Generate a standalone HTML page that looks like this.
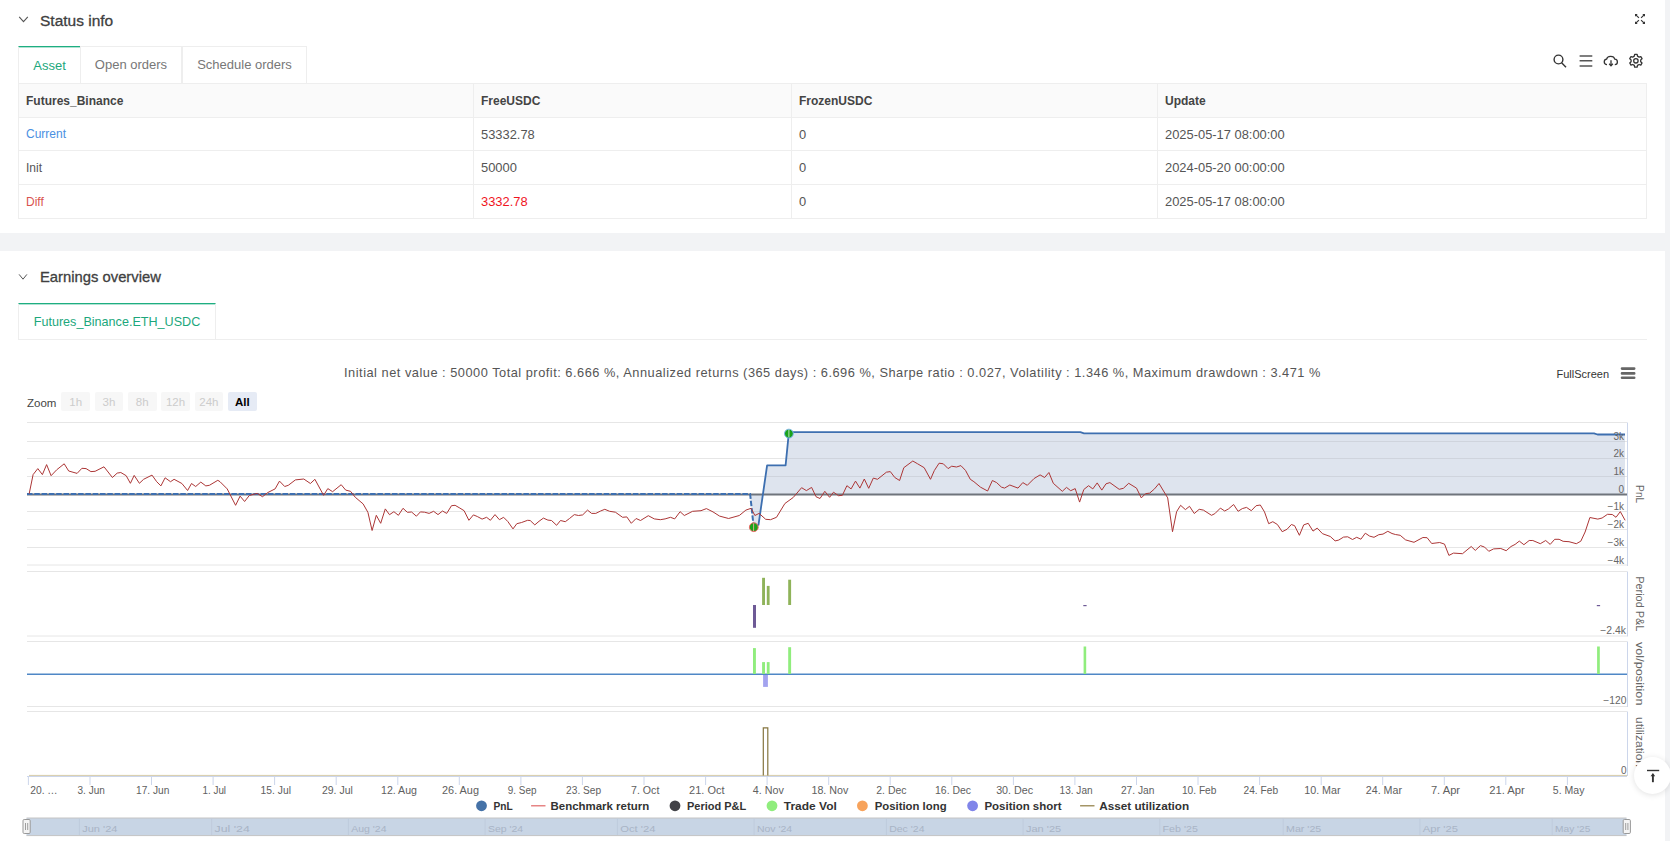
<!DOCTYPE html>
<html><head><meta charset="utf-8">
<style>
*{box-sizing:border-box;margin:0;padding:0}
html,body{width:1670px;height:841px;overflow:hidden;background:#f2f3f5;font-family:"Liberation Sans",sans-serif;color:#333}
.card{position:absolute;left:0;width:1665px;background:#fff}
.abs{position:absolute;white-space:nowrap}
.hdr{font-size:15px;color:#404040;line-height:1;-webkit-text-stroke:0.3px #404040}
.tabs{position:absolute;top:46px;left:18px;height:37px}
.tab{position:absolute;top:0;height:37px;border:1px solid #eeeeee;border-bottom:none;font-size:13px;color:#777;text-align:center;line-height:35px}
.tab.on{border-top:1px solid #1eae81;box-shadow:inset 0 1px 0 rgba(30,174,129,0.35);color:#1ca77c;line-height:37px}
table{position:absolute;left:18px;top:83px;width:1628px;border-collapse:collapse;font-size:12px;table-layout:fixed}
td,th{border:1px solid #eeeeee;padding:0 7px;text-align:left;color:#555;height:34px}
th{background:#fafafa;font-weight:bold;color:#444}
td.n{font-size:12.9px}
tr.r33 td{height:33px}
.zb{position:absolute;top:392px;width:28.5px;height:19px;background:#f7f7f7;border-radius:2px;font-size:11.5px;color:#ccc;text-align:center;line-height:21px}
</style></head><body>
<div class="card" style="top:0;height:233px"></div>
<div class="card" style="top:251px;height:600px"></div>

<!-- Status info header -->
<svg class="abs" style="left:18px;top:15px" width="12" height="10" viewBox="0 0 12 10"><path d="M1.2 1.8 L5.5 6.6 L9.8 1.8" fill="none" stroke="#555" stroke-width="1.1"/></svg>
<div class="abs hdr" style="left:40px;top:13px;font-size:15.5px">Status info</div>
<svg class="abs" style="left:1633px;top:12px" width="14" height="14" viewBox="0 0 14 14">
<g stroke="#333" stroke-width="1.15" fill="none">
<path d="M2.6 2.6 L5.9 5.9"/><path d="M11.4 2.6 L8.1 5.9"/><path d="M2.6 11.4 L5.9 8.1"/><path d="M11.4 11.4 L8.1 8.1"/></g>
<g fill="#333"><path d="M2 2 h2.7 l-2.7 2.7z"/><path d="M12 2 h-2.7 l2.7 2.7z"/><path d="M2 12 h2.7 l-2.7 -2.7z"/><path d="M12 12 h-2.7 l2.7 -2.7z"/></g>
</svg>

<div class="tabs">
<div class="tab on" style="left:0;width:63px">Asset</div>
<div class="tab" style="left:62px;width:102px">Open orders</div>
<div class="tab" style="left:164px;width:125px">Schedule orders</div>
</div>

<!-- top right icons -->
<svg class="abs" style="left:1550px;top:52px" width="95" height="20" viewBox="0 0 95 20">
<g fill="none" stroke="#333" stroke-width="1.4">
<circle cx="8.5" cy="7.5" r="4.4"/><path d="M11.6 10.8 L16 15.2"/>
</g>
<g stroke="#555" stroke-width="1.5"><path d="M29.6 3.9h12.7M29.6 8.8h12.7M29.6 13.9h12.7"/></g>
<g fill="none" stroke="#333" stroke-width="1.3">
<path d="M57 12.6 C53.5 12.6 53.3 7.6 56.6 7.2 C57.2 3.6 63.8 3.2 64.8 7.2 C68.3 7.4 68.2 12.6 64.8 12.6"/>
<path d="M61 8.2 V13.5"/><path d="M59.2 11.8 L61 13.8 L62.8 11.8"/>
</g>
<g fill="none" stroke="#333" stroke-width="1.3">
<path stroke-linejoin="round" d="M84.66 2.42 L87.14 2.42 L87.50 4.17 L89.11 5.10 L90.81 4.54 L92.05 6.68 L90.71 7.87 L90.71 9.73 L92.05 10.92 L90.81 13.06 L89.11 12.50 L87.50 13.43 L87.14 15.18 L84.66 15.18 L84.30 13.43 L82.69 12.50 L80.99 13.06 L79.75 10.92 L81.09 9.73 L81.09 7.87 L79.75 6.68 L80.99 4.54 L82.69 5.10 L84.30 4.17Z"/>
<circle cx="85.9" cy="8.8" r="2.2"/>
</g>
</svg>

<table>
<colgroup><col style="width:455px"><col style="width:318px"><col style="width:366px"><col style="width:489px"></colgroup>
<tr><th>Futures_Binance</th><th>FreeUSDC</th><th>FrozenUSDC</th><th>Update</th></tr>
<tr class="r33"><td style="color:#4a90e2">Current</td><td class="n">53332.78</td><td class="n">0</td><td class="n">2025-05-17 08:00:00</td></tr>
<tr><td>Init</td><td class="n">50000</td><td class="n">0</td><td class="n">2024-05-20 00:00:00</td></tr>
<tr><td style="color:#d9534f">Diff</td><td class="n" style="color:#f0141e">3332.78</td><td class="n">0</td><td class="n">2025-05-17 08:00:00</td></tr>
</table>

<!-- Earnings overview -->
<svg class="abs" style="left:18px;top:273px" width="12" height="10" viewBox="0 0 12 10"><path d="M1.1 1.4 L5.0 6.2 L8.9 1.4" fill="none" stroke="#555" stroke-width="1.0"/></svg>
<div class="abs hdr" style="left:40px;top:270px;font-size:14.8px">Earnings overview</div>
<div class="abs" style="left:18px;top:339px;width:1629px;height:1px;background:#eeeeee"></div>
<div class="tab on" style="position:absolute;left:18px;top:303px;width:198px;height:37px;font-size:12.6px">Futures_Binance.ETH_USDC</div>

<div class="abs" style="left:0;width:1665px;top:365px;text-align:center;font-size:12.8px;letter-spacing:0.505px;color:#555;padding-right:0">Initial net value : 50000 Total profit: 6.666 %, Annualized returns (365 days) : 6.696 %, Sharpe ratio : 0.027, Volatility : 1.346 %, Maximum drawdown : 3.471 %</div>
<div class="abs" style="left:1556.5px;top:368px;font-size:11px;color:#333">FullScreen</div>
<svg class="abs" style="left:1618px;top:365px" width="20" height="16" viewBox="0 0 20 16"><g stroke="#666" stroke-width="2.6" stroke-linecap="round"><path d="M4 3.6h12.2M4 8.4h12.2M4 12.8h12.2"/></g></svg>

<div class="abs" style="left:27px;top:396.5px;font-size:11.5px;color:#444">Zoom</div>
<div class="zb" style="left:61.4px">1h</div>
<div class="zb" style="left:94.7px">3h</div>
<div class="zb" style="left:128px">8h</div>
<div class="zb" style="left:161.3px">12h</div>
<div class="zb" style="left:194.6px">24h</div>
<div class="zb" style="left:228px;background:#e6ebf5;color:#000;font-weight:bold">All</div>

<svg class="abs" style="left:0;top:0" width="1670" height="841" viewBox="0 0 1670 841" font-family="&quot;Liberation Sans&quot;, sans-serif">
<g stroke="#e6e6e6" stroke-width="1">
<path d="M27 422.5H1627"/>
<path d="M27 441.5H1627"/>
<path d="M27 458.5H1627"/>
<path d="M27 476.5H1627"/>
<path d="M27 511.5H1627"/>
<path d="M27 529.5H1627"/>
<path d="M27 547.5H1627"/>
<path d="M27 565H1627"/>
<path d="M27 571.5H1627"/>
<path d="M27 636H1627"/>
<path d="M27 641.5H1627"/>
<path d="M27 706.5H1627"/>
<path d="M27 711.5H1627"/>
</g>
<clipPath id="fc"><path d="M27.0 494.5 L750.1 494.5 L753.7 527.2 L758.5 524.8 L767.1 465.4 L785.6 465.4 L788.9 432.2 L1080.4 432.2 L1084.0 433.3 L1594.0 433.3 L1597.5 434.5 L1625.0 434.5 L1625.0 494.5 Z"/></clipPath>
<path d="M27.0 494.5 L750.1 494.5 L753.7 527.2 L758.5 524.8 L767.1 465.4 L785.6 465.4 L788.9 432.2 L1080.4 432.2 L1084.0 433.3 L1594.0 433.3 L1597.5 434.5 L1625.0 434.5 L1625.0 494.5 Z" fill="rgb(72,105,161)" fill-opacity="0.18"/>
<g clip-path="url(#fc)" stroke="#fff" stroke-opacity="0.12" stroke-width="1"><path d="M27 441.5H1627"/><path d="M27 458.5H1627"/><path d="M27 476.5H1627"/></g>
<path d="M27 494.5H1627" stroke="#6f747c" stroke-width="2.2"/>
<path d="M27.0 493.9 L750.1 493.9 L753.7 527.2" fill="none" stroke="#3d6fb0" stroke-width="2" stroke-dasharray="5.5,1.8"/>
<path d="M753.7 527.2 L758.5 524.8 L767.1 465.4 L785.6 465.4 L788.9 432.2 L1080.4 432.2 L1084.0 433.3 L1594.0 433.3 L1597.5 434.5 L1625.0 434.5" fill="none" stroke="#3d6fb0" stroke-width="1.8" stroke-linejoin="round"/>
<path d="M29.2 493.7 L33.1 474.6 L37.8 468.6 L42.4 474.6 L46.6 464.6 L51.1 475.7 L56.7 469.8 L64.2 463.8 L68.7 471.0 L77.1 473.4 L81.9 468.3 L86.1 468.6 L90.9 471.6 L95.1 471.3 L104.0 466.8 L112.4 477.5 L117.2 473.1 L120.8 472.5 L126.2 475.7 L130.4 483.3 L134.2 475.4 L139.4 483.3 L143.6 479.3 L152.0 475.1 L156.7 481.7 L160.9 485.9 L165.1 477.8 L170.5 481.7 L174.1 479.3 L181.9 483.5 L187.6 490.5 L191.5 483.5 L195.7 486.5 L200.8 482.1 L205.8 485.9 L209.4 485.3 L217.8 480.3 L220.0 481.7 L227.2 488.9 L235.6 505.3 L240.1 496.1 L244.6 501.5 L249.3 495.5 L257.1 493.4 L262.5 496.7 L267.9 492.5 L275.1 488.9 L279.5 481.1 L284.7 486.5 L288.3 485.3 L295.4 479.9 L303.8 479.0 L310.4 483.5 L314.9 479.3 L323.6 495.3 L327.8 488.6 L332.6 491.7 L341.2 484.7 L345.7 490.1 L350.5 491.3 L355.3 497.3 L363.1 503.9 L367.9 512.3 L372.1 530.5 L376.3 515.3 L380.7 523.3 L385.3 508.9 L389.5 514.7 L393.9 511.7 L398.4 515.3 L403.0 508.3 L407.4 512.3 L411.6 512.0 L416.4 516.2 L420.4 511.9 L424.6 512.2 L429.1 513.4 L433.6 511.3 L438.0 514.6 L442.5 511.0 L446.7 513.4 L451.5 505.7 L455.1 505.3 L459.9 508.1 L464.1 510.7 L468.9 520.3 L473.4 514.9 L477.3 516.5 L482.1 519.1 L486.6 517.3 L490.4 520.3 L495.0 514.6 L499.4 519.7 L503.6 517.3 L507.8 521.5 L513.0 528.9 L516.8 523.7 L521.6 522.5 L527.6 520.3 L530.2 520.5 L534.8 524.9 L539.0 521.3 L543.4 518.1 L547.9 520.1 L551.5 520.5 L556.6 525.3 L560.5 520.5 L565.3 521.7 L569.5 518.5 L574.3 514.6 L578.5 515.5 L582.7 514.9 L587.5 510.1 L591.6 513.4 L595.8 513.4 L600.6 511.0 L604.8 509.3 L609.6 511.3 L615.4 512.2 L622.6 517.3 L626.8 516.9 L631.3 523.3 L636.1 518.5 L640.5 520.5 L648.3 515.7 L654.3 518.9 L660.3 519.7 L665.1 518.9 L670.5 517.3 L674.7 518.9 L680.1 511.7 L684.3 515.5 L692.6 511.3 L701.0 510.7 L706.4 508.6 L713.0 511.9 L719.6 516.1 L728.6 518.5 L739.3 515.5 L745.9 510.1 L751.1 508.3 L754.9 515.5 L759.1 513.4 L765.7 519.3 L770.5 519.7 L776.5 517.3 L784.9 503.5 L793.2 497.5 L801.6 487.7 L806.4 490.6 L811.6 487.4 L816.0 496.7 L820.0 498.5 L824.8 491.3 L829.6 497.3 L833.5 492.2 L838.5 495.7 L842.4 495.3 L846.9 485.7 L851.1 488.9 L855.5 481.1 L859.9 488.1 L864.3 479.0 L868.7 488.3 L873.3 478.1 L877.5 479.3 L886.4 472.2 L890.3 471.6 L894.8 477.5 L899.6 480.5 L903.8 467.7 L912.8 461.0 L917.6 463.8 L924.2 467.7 L930.5 479.3 L934.3 470.6 L939.1 463.2 L943.3 463.8 L948.1 468.6 L951.7 466.2 L956.5 467.0 L960.9 465.6 L965.5 470.4 L970.3 479.3 L973.9 481.7 L980.4 487.1 L987.6 491.0 L992.4 480.5 L996.6 482.6 L1001.4 487.1 L1004.6 488.1 L1009.8 485.0 L1018.0 488.1 L1022.8 482.6 L1027.3 485.3 L1034.1 478.5 L1040.1 474.9 L1044.6 477.5 L1048.9 472.5 L1053.3 483.3 L1062.3 491.3 L1066.5 487.4 L1070.7 490.7 L1075.2 488.6 L1079.6 502.1 L1083.8 489.5 L1088.6 485.7 L1092.8 488.9 L1097.2 482.9 L1101.8 490.1 L1106.0 483.8 L1109.9 482.6 L1119.2 489.3 L1123.4 488.3 L1128.7 483.3 L1136.5 488.1 L1141.3 497.9 L1145.5 493.7 L1149.7 493.1 L1154.5 488.9 L1159.0 483.5 L1167.7 497.9 L1172.5 531.7 L1176.6 511.7 L1180.6 505.3 L1185.4 509.6 L1189.5 506.3 L1194.3 513.5 L1199.2 509.3 L1203.4 510.1 L1211.5 515.3 L1214.8 513.7 L1220.4 508.1 L1224.7 511.0 L1228.5 508.9 L1233.6 504.5 L1238.1 511.3 L1242.3 508.6 L1246.5 507.4 L1251.3 510.7 L1256.1 505.7 L1260.3 505.0 L1264.5 511.9 L1268.7 523.7 L1272.8 521.7 L1277.4 524.5 L1282.2 531.7 L1287.0 529.3 L1291.4 524.5 L1294.6 525.7 L1299.4 535.3 L1303.7 524.9 L1308.2 523.3 L1313.0 531.1 L1317.2 528.1 L1322.5 533.7 L1330.3 536.5 L1335.1 540.9 L1338.7 540.1 L1343.5 537.1 L1347.7 536.8 L1352.5 539.5 L1356.7 537.3 L1360.9 539.2 L1365.3 533.2 L1369.6 536.1 L1374.0 537.3 L1378.8 534.7 L1383.0 534.1 L1387.8 531.3 L1392.0 533.5 L1395.4 534.5 L1400.2 535.3 L1405.6 539.9 L1414.0 542.3 L1422.9 537.5 L1427.1 537.7 L1431.7 543.5 L1439.7 542.5 L1444.5 544.1 L1448.9 555.4 L1453.5 553.1 L1462.5 553.7 L1471.2 546.5 L1475.3 550.4 L1480.4 545.6 L1484.6 547.1 L1488.8 551.3 L1493.6 548.9 L1500.8 548.5 L1506.2 550.7 L1511.0 546.5 L1515.1 544.4 L1519.3 541.1 L1523.9 544.7 L1529.2 540.5 L1532.8 540.5 L1540.3 543.7 L1545.7 540.5 L1550.2 544.4 L1554.7 539.3 L1559.1 539.3 L1563.1 541.3 L1569.0 541.7 L1576.3 543.7 L1580.8 541.2 L1585.1 532.0 L1589.9 517.5 L1597.8 519.1 L1602.1 518.0 L1607.5 514.3 L1612.3 514.5 L1616.0 517.3 L1620.3 511.6 L1625.1 520.3" fill="none" stroke="#ac3636" stroke-width="1" stroke-linejoin="round"/>
<circle cx="753.8" cy="527.2" r="4.4" fill="#1aa31a" stroke="#f06a6a" stroke-width="1"/>
<path d="M753.6 523.3V531" stroke="#f2a9a0" stroke-width="0.9"/>
<circle cx="788.9" cy="433.6" r="4.4" fill="#1aa31a" stroke="#7cb5ec" stroke-width="1"/>
<path d="M788.9 429.7V437" stroke="#cfe9cf" stroke-width="0.9"/>
<g stroke="#ccd6eb" stroke-width="1">
<path d="M1627.5 422.5V566"/>
<path d="M1627.5 571.5V636.5"/>
<path d="M1627.5 641.5V707"/>
<path d="M1627.5 711.5V776"/>
</g>
<text x="1624" y="440.0" font-size="10" fill="#666" font-weight="normal" text-anchor="end">3k</text>
<text x="1624" y="457.0" font-size="10" fill="#666" font-weight="normal" text-anchor="end">2k</text>
<text x="1624" y="475.0" font-size="10" fill="#666" font-weight="normal" text-anchor="end">1k</text>
<text x="1624" y="492.7" font-size="10" fill="#666" font-weight="normal" text-anchor="end">0</text>
<text x="1624" y="510.0" font-size="10" fill="#666" font-weight="normal" text-anchor="end">−1k</text>
<text x="1624" y="528.0" font-size="10" fill="#666" font-weight="normal" text-anchor="end">−2k</text>
<text x="1624" y="546.0" font-size="10" fill="#666" font-weight="normal" text-anchor="end">−3k</text>
<text x="1624" y="563.5" font-size="10" fill="#666" font-weight="normal" text-anchor="end">−4k</text>
<text x="1626" y="633.5" font-size="10" fill="#666" font-weight="normal" text-anchor="end" textLength="25.7" lengthAdjust="spacingAndGlyphs">−2.4k</text>
<text x="1626.5" y="703.5" font-size="10" fill="#666" font-weight="normal" text-anchor="end" textLength="23.2" lengthAdjust="spacingAndGlyphs">−120</text>
<text x="1626.5" y="773.5" font-size="10" fill="#666" font-weight="normal" text-anchor="end">0</text>
<text transform="translate(1636 494.2) rotate(90)" x="0" y="0" font-size="11" fill="#666" text-anchor="middle" textLength="18.2" lengthAdjust="spacingAndGlyphs">PnL</text>
<text transform="translate(1636 603.8) rotate(90)" x="0" y="0" font-size="11" fill="#666" text-anchor="middle" textLength="55.2" lengthAdjust="spacingAndGlyphs">Period P&amp;L</text>
<text transform="translate(1636 673.7) rotate(90)" x="0" y="0" font-size="11" fill="#666" text-anchor="middle" textLength="63.5" lengthAdjust="spacingAndGlyphs">vol/position</text>
<text transform="translate(1636 742) rotate(90)" x="0" y="0" font-size="11" fill="#666" text-anchor="middle" textLength="50" lengthAdjust="spacingAndGlyphs">utilization</text>
<g fill="#8fb35a">
<rect x="762.1" y="577.8" width="2.9" height="27.2"/>
<rect x="766.8" y="585.9" width="2.8" height="19.1"/>
<rect x="788.2" y="579.7" width="2.9" height="25.3"/>
</g>
<rect x="753" y="605" width="3" height="22.8" fill="#6e5a96"/>
<rect x="1083.3" y="605" width="3.3" height="1.2" fill="#6e5a96"/>
<rect x="1596.8" y="605" width="3.3" height="1.2" fill="#6e5a96"/>
<path d="M27 674.2H1627" stroke="#4f87c6" stroke-width="1.6"/>
<g fill="#90ed7d">
<rect x="753" y="648.1" width="2.9" height="25.9"/>
<rect x="762.1" y="662.1" width="2.9" height="11.9"/>
<rect x="766.8" y="662.1" width="2.8" height="11.9"/>
<rect x="788.2" y="647.2" width="2.9" height="26.8"/>
<rect x="1083.6" y="646.5" width="2.6" height="27.5"/>
<rect x="1597.1" y="646.5" width="2.7" height="27.5"/>
</g>
<rect x="763.1" y="675" width="4.8" height="11.9" fill="#a3a3ef"/>
<path d="M27 776.5H1627" stroke="#ccd6eb" stroke-width="1"/>
<path d="M29 775.4H1627" stroke="#d6cba8" stroke-width="1"/>
<path d="M763.3 775.5V727.8H767.8V775.5" fill="none" stroke="#85753f" stroke-width="1.2"/>
<g stroke="#ccd6eb" stroke-width="1">
<path d="M28.4 776V785"/>
<path d="M90.0 776V785"/>
<path d="M151.5 776V785"/>
<path d="M213.1 776V785"/>
<path d="M274.6 776V785"/>
<path d="M336.2 776V785"/>
<path d="M397.8 776V785"/>
<path d="M459.3 776V785"/>
<path d="M520.9 776V785"/>
<path d="M582.4 776V785"/>
<path d="M644.0 776V785"/>
<path d="M705.6 776V785"/>
<path d="M767.1 776V785"/>
<path d="M828.7 776V785"/>
<path d="M890.2 776V785"/>
<path d="M951.8 776V785"/>
<path d="M1013.4 776V785"/>
<path d="M1074.9 776V785"/>
<path d="M1136.5 776V785"/>
<path d="M1198.0 776V785"/>
<path d="M1259.6 776V785"/>
<path d="M1321.2 776V785"/>
<path d="M1382.7 776V785"/>
<path d="M1444.3 776V785"/>
<path d="M1505.8 776V785"/>
<path d="M1567.4 776V785"/>
</g>
<text x="30.2" y="793.6" font-size="10" fill="#606060" font-weight="normal" text-anchor="start" textLength="27.5" lengthAdjust="spacingAndGlyphs">20. …</text>
<text x="91.2" y="793.6" font-size="10" fill="#606060" font-weight="normal" text-anchor="middle" textLength="27.3" lengthAdjust="spacingAndGlyphs">3. Jun</text>
<text x="152.7" y="793.6" font-size="10" fill="#606060" font-weight="normal" text-anchor="middle" textLength="33.3" lengthAdjust="spacingAndGlyphs">17. Jun</text>
<text x="214.3" y="793.6" font-size="10" fill="#606060" font-weight="normal" text-anchor="middle" textLength="23.5" lengthAdjust="spacingAndGlyphs">1. Jul</text>
<text x="275.8" y="793.6" font-size="10" fill="#606060" font-weight="normal" text-anchor="middle" textLength="30.4" lengthAdjust="spacingAndGlyphs">15. Jul</text>
<text x="337.4" y="793.6" font-size="10" fill="#606060" font-weight="normal" text-anchor="middle" textLength="30.9" lengthAdjust="spacingAndGlyphs">29. Jul</text>
<text x="399.0" y="793.6" font-size="10" fill="#606060" font-weight="normal" text-anchor="middle" textLength="35.9" lengthAdjust="spacingAndGlyphs">12. Aug</text>
<text x="460.5" y="793.6" font-size="10" fill="#606060" font-weight="normal" text-anchor="middle" textLength="36.9" lengthAdjust="spacingAndGlyphs">26. Aug</text>
<text x="522.1" y="793.6" font-size="10" fill="#606060" font-weight="normal" text-anchor="middle" textLength="28.7" lengthAdjust="spacingAndGlyphs">9. Sep</text>
<text x="583.6" y="793.6" font-size="10" fill="#606060" font-weight="normal" text-anchor="middle" textLength="35.0" lengthAdjust="spacingAndGlyphs">23. Sep</text>
<text x="645.2" y="793.6" font-size="10" fill="#606060" font-weight="normal" text-anchor="middle" textLength="28.3" lengthAdjust="spacingAndGlyphs">7. Oct</text>
<text x="706.8" y="793.6" font-size="10" fill="#606060" font-weight="normal" text-anchor="middle" textLength="35.4" lengthAdjust="spacingAndGlyphs">21. Oct</text>
<text x="768.3" y="793.6" font-size="10" fill="#606060" font-weight="normal" text-anchor="middle" textLength="31.1" lengthAdjust="spacingAndGlyphs">4. Nov</text>
<text x="829.9" y="793.6" font-size="10" fill="#606060" font-weight="normal" text-anchor="middle" textLength="36.9" lengthAdjust="spacingAndGlyphs">18. Nov</text>
<text x="891.4" y="793.6" font-size="10" fill="#606060" font-weight="normal" text-anchor="middle" textLength="30.2" lengthAdjust="spacingAndGlyphs">2. Dec</text>
<text x="953.0" y="793.6" font-size="10" fill="#606060" font-weight="normal" text-anchor="middle" textLength="35.9" lengthAdjust="spacingAndGlyphs">16. Dec</text>
<text x="1014.6" y="793.6" font-size="10" fill="#606060" font-weight="normal" text-anchor="middle" textLength="36.9" lengthAdjust="spacingAndGlyphs">30. Dec</text>
<text x="1076.1" y="793.6" font-size="10" fill="#606060" font-weight="normal" text-anchor="middle" textLength="33.0" lengthAdjust="spacingAndGlyphs">13. Jan</text>
<text x="1137.7" y="793.6" font-size="10" fill="#606060" font-weight="normal" text-anchor="middle" textLength="33.5" lengthAdjust="spacingAndGlyphs">27. Jan</text>
<text x="1199.2" y="793.6" font-size="10" fill="#606060" font-weight="normal" text-anchor="middle" textLength="34.5" lengthAdjust="spacingAndGlyphs">10. Feb</text>
<text x="1260.8" y="793.6" font-size="10" fill="#606060" font-weight="normal" text-anchor="middle" textLength="34.5" lengthAdjust="spacingAndGlyphs">24. Feb</text>
<text x="1322.4" y="793.6" font-size="10" fill="#606060" font-weight="normal" text-anchor="middle" textLength="36.4" lengthAdjust="spacingAndGlyphs">10. Mar</text>
<text x="1383.9" y="793.6" font-size="10" fill="#606060" font-weight="normal" text-anchor="middle" textLength="36.2" lengthAdjust="spacingAndGlyphs">24. Mar</text>
<text x="1445.5" y="793.6" font-size="10" fill="#606060" font-weight="normal" text-anchor="middle" textLength="29.2" lengthAdjust="spacingAndGlyphs">7. Apr</text>
<text x="1507.0" y="793.6" font-size="10" fill="#606060" font-weight="normal" text-anchor="middle" textLength="35.7" lengthAdjust="spacingAndGlyphs">21. Apr</text>
<text x="1568.6" y="793.6" font-size="10" fill="#606060" font-weight="normal" text-anchor="middle" textLength="31.6" lengthAdjust="spacingAndGlyphs">5. May</text>
<circle cx="481.5" cy="805.8" r="5.4" fill="#4572a7"/>
<text x="493.5" y="810" font-size="11.5" fill="#333" font-weight="bold" text-anchor="start" textLength="19.2" lengthAdjust="spacingAndGlyphs">PnL</text>
<path d="M531.0999999999999 805.8H545.5" stroke="#e06666" stroke-width="1.2"/>
<text x="550.5" y="810" font-size="11.5" fill="#333" font-weight="bold" text-anchor="start" textLength="98.7" lengthAdjust="spacingAndGlyphs">Benchmark return</text>
<circle cx="675" cy="805.8" r="5.4" fill="#434348"/>
<text x="687" y="810" font-size="11.5" fill="#333" font-weight="bold" text-anchor="start" textLength="59.2" lengthAdjust="spacingAndGlyphs">Period P&amp;L</text>
<circle cx="772" cy="805.8" r="5.4" fill="#90ed7d"/>
<text x="783.8" y="810" font-size="11.5" fill="#333" font-weight="bold" text-anchor="start" textLength="53.0" lengthAdjust="spacingAndGlyphs">Trade Vol</text>
<circle cx="862.4" cy="805.8" r="5.4" fill="#f7a35c"/>
<text x="874.7" y="810" font-size="11.5" fill="#333" font-weight="bold" text-anchor="start" textLength="71.9" lengthAdjust="spacingAndGlyphs">Position long</text>
<circle cx="972.6" cy="805.8" r="5.4" fill="#8085e9"/>
<text x="984.4" y="810" font-size="11.5" fill="#333" font-weight="bold" text-anchor="start" textLength="77.2" lengthAdjust="spacingAndGlyphs">Position short</text>
<path d="M1080.1 805.8H1094.5" stroke="#8d7a3f" stroke-width="1.2"/>
<text x="1099.2" y="810" font-size="11.5" fill="#333" font-weight="bold" text-anchor="start" textLength="90.0" lengthAdjust="spacingAndGlyphs">Asset utilization</text>
<rect x="26.5" y="818" width="1600" height="17.6" fill="#c8d5e5"/>
<path d="M26.5 818H1626.5M26.5 835.6H1626.5" stroke="#c4c4c4" stroke-width="1"/>
<g stroke="#bfcbdc" stroke-width="1">
<path d="M79.4 818.5V835"/>
<path d="M211.7 818.5V835"/>
<path d="M348.4 818.5V835"/>
<path d="M485.1 818.5V835"/>
<path d="M617.4 818.5V835"/>
<path d="M754.1 818.5V835"/>
<path d="M886.4 818.5V835"/>
<path d="M1023.1 818.5V835"/>
<path d="M1159.8 818.5V835"/>
<path d="M1283.2 818.5V835"/>
<path d="M1419.9 818.5V835"/>
<path d="M1552.2 818.5V835"/>
</g>
<text x="82.2" y="831.7" font-size="9.8" fill="#a8b4c6" font-weight="normal" text-anchor="start" textLength="35.3" lengthAdjust="spacingAndGlyphs">Jun '24</text>
<text x="214.5" y="831.7" font-size="9.8" fill="#a8b4c6" font-weight="normal" text-anchor="start" textLength="35.3" lengthAdjust="spacingAndGlyphs">Jul '24</text>
<text x="351.2" y="831.7" font-size="9.8" fill="#a8b4c6" font-weight="normal" text-anchor="start" textLength="35.3" lengthAdjust="spacingAndGlyphs">Aug '24</text>
<text x="487.9" y="831.7" font-size="9.8" fill="#a8b4c6" font-weight="normal" text-anchor="start" textLength="35.3" lengthAdjust="spacingAndGlyphs">Sep '24</text>
<text x="620.2" y="831.7" font-size="9.8" fill="#a8b4c6" font-weight="normal" text-anchor="start" textLength="35.3" lengthAdjust="spacingAndGlyphs">Oct '24</text>
<text x="756.9" y="831.7" font-size="9.8" fill="#a8b4c6" font-weight="normal" text-anchor="start" textLength="35.3" lengthAdjust="spacingAndGlyphs">Nov '24</text>
<text x="889.2" y="831.7" font-size="9.8" fill="#a8b4c6" font-weight="normal" text-anchor="start" textLength="35.3" lengthAdjust="spacingAndGlyphs">Dec '24</text>
<text x="1025.9" y="831.7" font-size="9.8" fill="#a8b4c6" font-weight="normal" text-anchor="start" textLength="35.3" lengthAdjust="spacingAndGlyphs">Jan '25</text>
<text x="1162.6" y="831.7" font-size="9.8" fill="#a8b4c6" font-weight="normal" text-anchor="start" textLength="35.3" lengthAdjust="spacingAndGlyphs">Feb '25</text>
<text x="1286.0" y="831.7" font-size="9.8" fill="#a8b4c6" font-weight="normal" text-anchor="start" textLength="35.3" lengthAdjust="spacingAndGlyphs">Mar '25</text>
<text x="1422.7" y="831.7" font-size="9.8" fill="#a8b4c6" font-weight="normal" text-anchor="start" textLength="35.3" lengthAdjust="spacingAndGlyphs">Apr '25</text>
<text x="1555.0" y="831.7" font-size="9.8" fill="#a8b4c6" font-weight="normal" text-anchor="start" textLength="35.3" lengthAdjust="spacingAndGlyphs">May '25</text>
<rect x="23.0" y="819.5" width="7.2" height="14" rx="1.2" fill="#f4f4f4" stroke="#999" stroke-width="1"/>
<path d="M25.5 823V830M27.700000000000003 823V830" stroke="#888" stroke-width="0.8"/>
<rect x="1623.2" y="819.5" width="7.2" height="14" rx="1.2" fill="#f4f4f4" stroke="#999" stroke-width="1"/>
<path d="M1625.7 823V830M1627.8999999999999 823V830" stroke="#888" stroke-width="0.8"/>
</svg>

<!-- back to top -->
<div class="abs" style="left:1634.3px;top:757.2px;width:37px;height:37px;border-radius:50%;background:#fff;box-shadow:0 1px 6px rgba(0,0,0,0.12)"></div>
<svg class="abs" style="left:1643px;top:765px" width="20" height="20" viewBox="0 0 20 20"><g stroke="#333" fill="none"><path d="M4 5.5h12.2" stroke-width="1.4"/><path d="M9.9 9.5V17.2" stroke-width="1.9"/></g><path d="M9.9 7.9 L7.6 11.2 H12.2z" fill="#333"/></svg>
</body></html>
